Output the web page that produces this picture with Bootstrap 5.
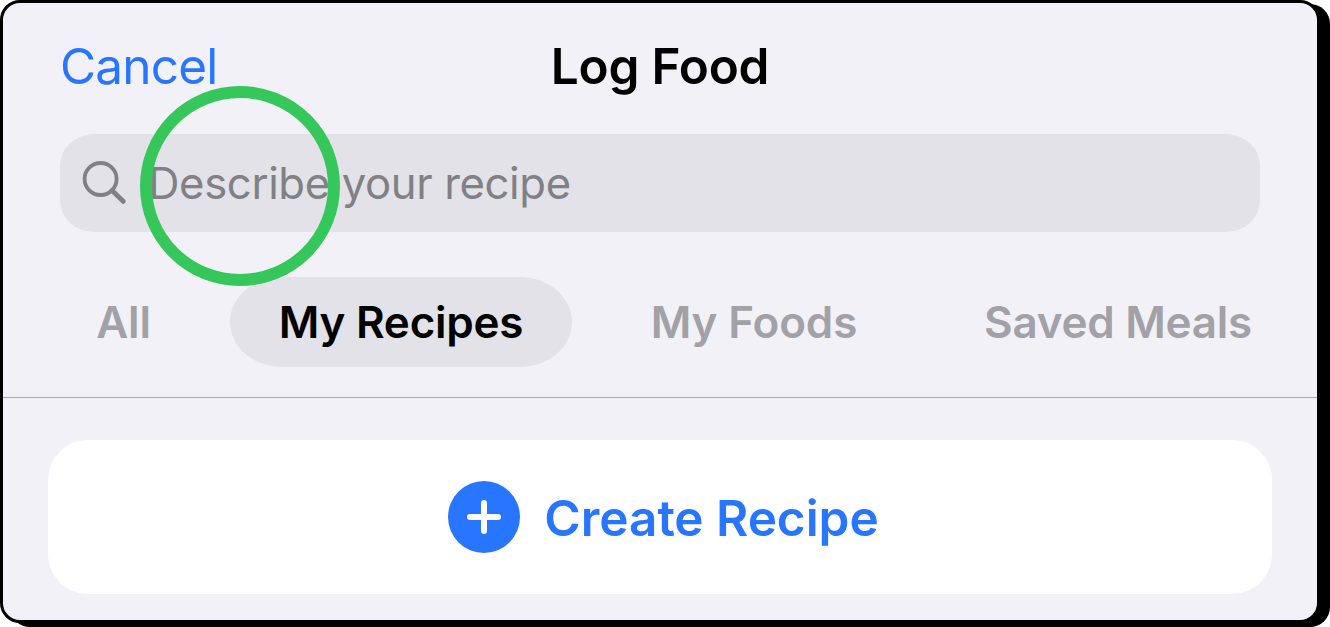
<!DOCTYPE html>
<html lang="en">
<head>
<meta charset="utf-8">
<meta name="viewport" content="width=device-width, initial-scale=1">
<title>Log Food</title>
<link rel="stylesheet" href="https://cdn.jsdelivr.net/npm/bootstrap@5.3.0/dist/css/bootstrap.min.css">
<style>
  body { font-family: Inter, "Liberation Sans", sans-serif; background: #fff; height: 627px; overflow: hidden; }
  .screen { width: 1320px; height: 623px; background: #f2f1f8; border: 3px solid #000; border-radius: 20px; box-shadow: 10px 4px 0 #000; }
  .topbar { display: grid; grid-template-columns: 1fr auto 1fr; height: 131px; padding: 0 57px 5px; font-size: 49.5px; line-height: 60px; }
  .cancel { color: #2876ff; text-decoration: none; letter-spacing: -.8px; }
  .heading { font-size: 49.5px; font-weight: 600; line-height: 60px; letter-spacing: -.2px; color: #000; }
  .search { height: 98px; margin: 0 57px; padding-left: 20px; background: #e3e2e8; border-radius: 34px / 32px; color: #808085; font-size: 43.6px; }
  .prompt { margin-left: 20px; padding-top: 2px; letter-spacing: -.35px; }
  .tap-ring { left: 80px; top: -48px; width: 200px; height: 200px; border: 12px solid #35c759; z-index: 2; }
  .tabs { height: 166px; padding-top: 45px; border-bottom: 1px solid #a9a9ad; font-size: 44px; font-weight: 600; }
  .tab { height: 90px; color: #a2a1a7; text-decoration: none; white-space: nowrap; letter-spacing: -.25px; }
  .tab-all { margin-left: 94px; width: 53px; }
  .tab-recipes { margin-left: 80px; width: 342px; background: #e3e2e8; color: #000; border-radius: 52px / 45px; }
  .tab-foods { margin-left: 79px; width: 206px; letter-spacing: -.15px; }
  .tab-meals { margin-left: 128px; width: 266px; }
  .create { height: 154px; margin: 42px 45px 0; padding-left: 7px; border: 0; border-radius: 40px; background: #fff; color: #2876ff; font-size: 49.5px; font-weight: 600; }
  .create-label { margin-left: 24px; padding-top: 2px; letter-spacing: -.04px; }
</style>
</head>
<body>
<main class="screen">
  <header class="topbar align-items-center">
    <a class="cancel" href="#">Cancel</a>
    <h1 class="heading m-0">Log Food</h1>
  </header>
  <div class="search position-relative d-flex align-items-center">
    <svg width="48" height="48" viewBox="0 0 48 48" fill="none" stroke="currentColor" aria-hidden="true">
      <circle cx="20.6" cy="20" r="16" stroke-width="3.8"/>
      <path d="M32 31.5L43.2 42.3" stroke-width="5" stroke-linecap="round"/>
    </svg>
    <span class="prompt">Describe your recipe</span>
    <span class="tap-ring position-absolute rounded-circle"></span>
  </div>
  <nav class="tabs d-flex align-items-start">
    <a class="tab tab-all d-flex align-items-center justify-content-center" href="#">All</a>
    <a class="tab tab-recipes d-flex align-items-center justify-content-center" href="#">My Recipes</a>
    <a class="tab tab-foods d-flex align-items-center justify-content-center" href="#">My Foods</a>
    <a class="tab tab-meals d-flex align-items-center justify-content-center" href="#">Saved Meals</a>
  </nav>
  <div class="create d-flex align-items-center justify-content-center">
    <svg width="72" height="72" viewBox="0 0 72 72" aria-hidden="true">
      <circle cx="36" cy="36" r="36" fill="#2876ff"/>
      <path d="M36 22V50M22 36H50" stroke="#fff" stroke-width="6" stroke-linecap="round"/>
    </svg>
    <span class="create-label">Create Recipe</span>
  </div>
</main>
<script src="https://cdn.jsdelivr.net/npm/bootstrap@5.3.0/dist/js/bootstrap.bundle.min.js"></script>
</body>
</html>
